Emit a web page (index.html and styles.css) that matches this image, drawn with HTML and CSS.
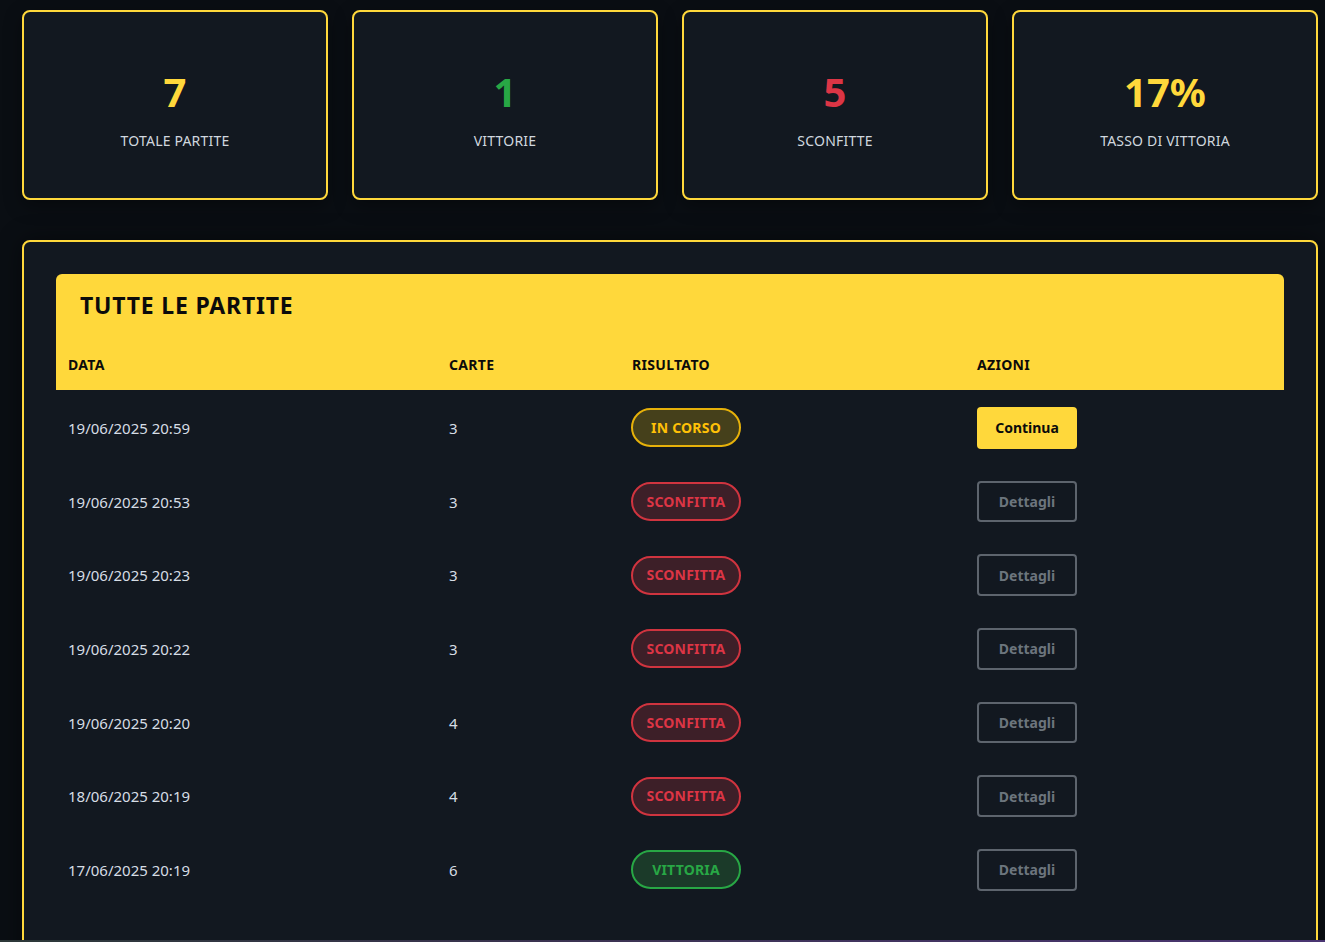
FILE: index.html
```html
<!DOCTYPE html>
<html lang="it">
<head>
<meta charset="utf-8">
<title>Partite</title>
<link rel="stylesheet" href="styles.css">
</head>
<body>
<main class="page">
  <section class="stats">
    <div class="stat-card"><div class="stat-value yellow">7</div><div class="stat-label">TOTALE PARTITE</div></div>
    <div class="stat-card"><div class="stat-value green">1</div><div class="stat-label">VITTORIE</div></div>
    <div class="stat-card"><div class="stat-value red">5</div><div class="stat-label">SCONFITTE</div></div>
    <div class="stat-card"><div class="stat-value yellow">17%</div><div class="stat-label">TASSO DI VITTORIA</div></div>
  </section>

  <section class="panel">
    <h2 class="panel-title">TUTTE LE PARTITE</h2>
    <table class="games">
      <thead>
        <tr><th class="c-date">DATA</th><th class="c-cards">CARTE</th><th class="c-result">RISULTATO</th><th class="c-actions">AZIONI</th></tr>
      </thead>
      <tbody>
        <tr><td>19/06/2025 20:59</td><td>3</td><td><span class="badge b-progress">IN CORSO</span></td><td><button class="btn btn-primary">Continua</button></td></tr>
        <tr><td>19/06/2025 20:53</td><td>3</td><td><span class="badge b-loss">SCONFITTA</span></td><td><button class="btn btn-outline">Dettagli</button></td></tr>
        <tr><td>19/06/2025 20:23</td><td>3</td><td><span class="badge b-loss">SCONFITTA</span></td><td><button class="btn btn-outline">Dettagli</button></td></tr>
        <tr><td>19/06/2025 20:22</td><td>3</td><td><span class="badge b-loss">SCONFITTA</span></td><td><button class="btn btn-outline">Dettagli</button></td></tr>
        <tr><td>19/06/2025 20:20</td><td>4</td><td><span class="badge b-loss">SCONFITTA</span></td><td><button class="btn btn-outline">Dettagli</button></td></tr>
        <tr><td>18/06/2025 20:19</td><td>4</td><td><span class="badge b-loss">SCONFITTA</span></td><td><button class="btn btn-outline">Dettagli</button></td></tr>
        <tr><td>17/06/2025 20:19</td><td>6</td><td><span class="badge b-win">VITTORIA</span></td><td><button class="btn btn-outline">Dettagli</button></td></tr>
      </tbody>
    </table>
  </section>
</main>
<div class="bottom-line"></div>
</body>
</html>
```

FILE: styles.css
```css
* { box-sizing: border-box; }

html, body {
  margin: 0;
  height: 100%;
  overflow: hidden;
}

body {
  background: #0a0e13;
  color: #d6dde5;
  font-family: "Noto Sans", "Open Sans", "Liberation Sans", sans-serif;
}

.page {
  padding: 10px 7px 0 22px;
}

.stats {
  display: grid;
  grid-template-columns: repeat(4, 1fr);
  gap: 24px;
}

.stat-card {
  height: 190px;
  padding-top: 7px;
  background: #121820;
  border: 2px solid #ffd83b;
  border-radius: 8px;
  display: flex;
  flex-direction: column;
  align-items: center;
  justify-content: center;
  box-shadow: 0 6px 18px rgba(0, 0, 0, 0.35);
}

.stat-value {
  font-size: 40px;
  font-weight: 700;
  line-height: 50px;
}

.stat-label {
  font-size: 14px;
  line-height: 20px;
  margin-top: 14px;
  color: #d0d7df;
  letter-spacing: 0.2px;
}

.yellow { color: #ffd83b; }
.green { color: #28a745; }
.red { color: #dc3545; }

.panel {
  margin-top: 40px;
  background: #121820;
  border: 2px solid #ffd83b;
  border-radius: 8px;
  padding: 32px;
  height: 760px;
  box-shadow: 0 0 24px rgba(0, 0, 0, 0.45);
}

.panel-title {
  margin: 0;
  background: #ffd83b;
  color: #0b0b0b;
  font-size: 23px;
  font-weight: 700;
  line-height: 32px;
  letter-spacing: 0.8px;
  padding: 15px 24px 17px;
  border-radius: 6px 6px 0 0;
}

.games {
  width: 100%;
  border-collapse: collapse;
}

.games th {
  background: #ffd83b;
  color: #0b0b0b;
  font-size: 14px;
  font-weight: 700;
  text-align: left;
  letter-spacing: 0.3px;
  padding: 17px 12px 16px;
  line-height: 19px;
}

.c-date { width: 381px; }
.c-cards { width: 183px; }
.c-result { width: 345px; }

.games td {
  padding: 16px 12px;
  font-size: 15px;
  color: #d6dde5;
  vertical-align: middle;
  line-height: 20px;
}

.games tbody tr:first-child td {
  padding-top: 17px;
}

.badge {
  display: inline-flex;
  align-items: center;
  justify-content: center;
  width: 110px;
  height: 39px;
  margin-left: -1px;
  border-radius: 20px;
  border: 2px solid;
  font-size: 14px;
  font-weight: 700;
  letter-spacing: 0.2px;
}

.b-progress { color: #ffc107; border-color: #e6b10a; background: #45401b; }
.b-loss { color: #dc3545; border-color: #d0343f; background: #3d1f28; }
.b-win { color: #28a745; border-color: #28a745; background: #1b3a29; }

.btn {
  width: 100px;
  height: 41.7px;
  border-radius: 4px;
  font-family: inherit;
  font-size: 14px;
  font-weight: 700;
  cursor: pointer;
}

.btn-primary {
  background: #ffd83b;
  border: 0;
  color: #0b0b0b;
}

.btn-outline {
  background: transparent;
  border: 2px solid #5d646d;
  color: #6c757d;
}

.bottom-line {
  position: fixed;
  left: 0;
  right: 0;
  bottom: 0;
  height: 2px;
  background: linear-gradient(90deg, #2c3838, #3a3350 40%, #4a3572);
}
```
